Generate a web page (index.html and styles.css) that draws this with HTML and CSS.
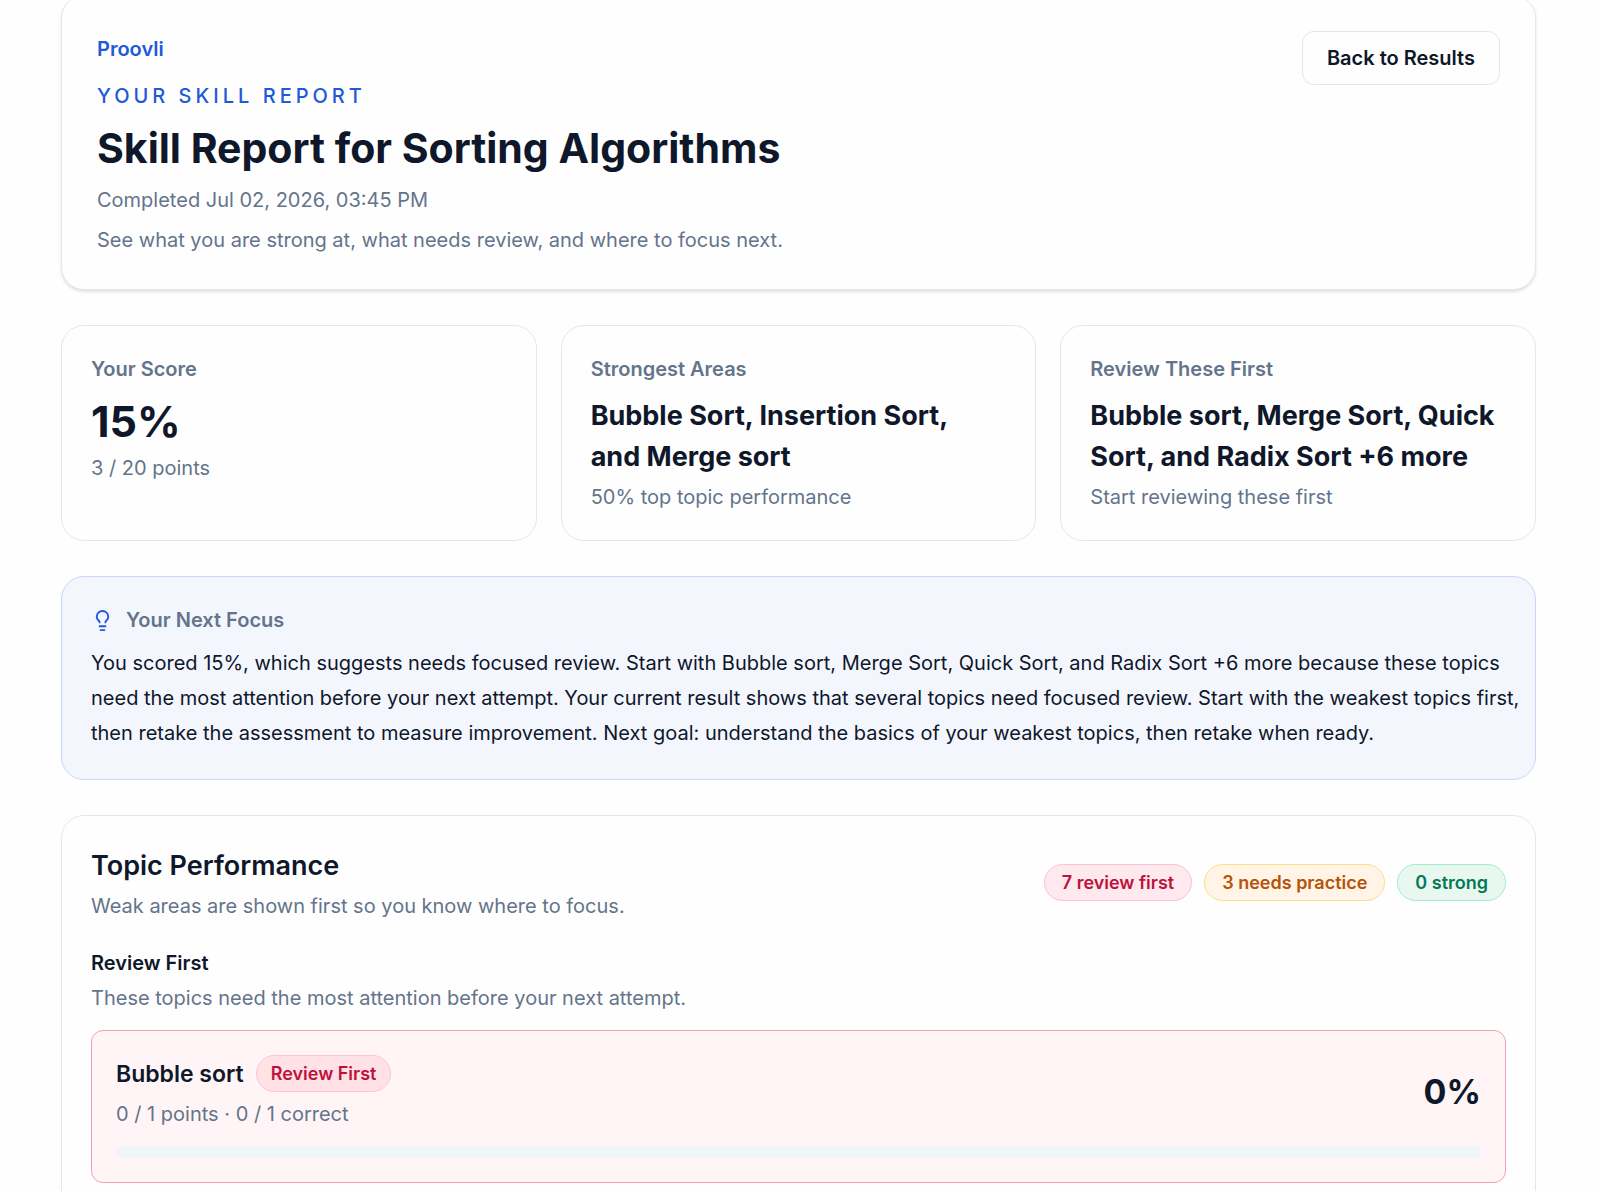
FILE: index.html
```
<!DOCTYPE html>
<html lang="en">
<head>
    <meta charset="UTF-8">
    <meta name="viewport" content="width=device-width, initial-scale=1.0">
    <title>Skill Report for Sorting Algorithms</title>
    <link rel="stylesheet" href="styles.css">
</head>
<body>
    <main class="report">
        <header class="card report-header">
            <div>
                <a class="brand" href="#">Proovli</a>
                <p class="eyebrow">Your Skill Report</p>
                <h1>Skill Report for Sorting Algorithms</h1>
                <p class="muted completed">Completed Jul 02, 2026, 03:45 PM</p>
                <p class="muted intro">See what you are strong at, what needs review, and where to focus next.</p>
            </div>
            <button class="back-btn" type="button">Back to Results</button>
        </header>

        <section class="summary">
            <div class="card">
                <p class="label">Your Score</p>
                <p class="score">15%</p>
                <p class="muted note">3 / 20 points</p>
            </div>
            <div class="card">
                <p class="label">Strongest Areas</p>
                <p class="areas">Bubble Sort, Insertion Sort, and&nbsp;Merge sort</p>
                <p class="muted note">50% top topic performance</p>
            </div>
            <div class="card">
                <p class="label">Review These First</p>
                <p class="areas">Bubble sort, Merge Sort, Quick Sort, and Radix Sort +6 more</p>
                <p class="muted note">Start reviewing these first</p>
            </div>
        </section>

        <section class="card focus">
            <div class="focus-title">
                <svg class="icon" viewBox="0 0 24 24" fill="none" stroke="currentColor" stroke-width="2" stroke-linecap="round" stroke-linejoin="round" aria-hidden="true">
                    <path d="M15 14c.2-1 .7-1.7 1.5-2.5 1-.9 1.5-2.2 1.5-3.5A6 6 0 0 0 6 8c0 1 .2 2.2 1.5 3.5.7.7 1.3 1.5 1.5 2.5"/>
                    <path d="M9 18h6"/>
                    <path d="M10 22h4"/>
                </svg>
                <h2 class="label">Your Next Focus</h2>
            </div>
            <p class="focus-text">You scored 15%, which suggests needs focused review. Start with Bubble sort, Merge Sort, Quick Sort, and Radix Sort +6 more because these topics need the most attention before your next attempt. Your current result shows that several topics need focused review. Start with the weakest topics first, then retake the assessment to measure improvement. Next goal: understand the basics of your weakest topics, then retake when ready.</p>
        </section>

        <section class="card topics">
            <div class="topics-header">
                <div>
                    <h2>Topic Performance</h2>
                    <p class="muted note">Weak areas are shown first so you know where to focus.</p>
                </div>
                <div class="pills">
                    <span class="pill pill-red">7 review first</span>
                    <span class="pill pill-amber">3 needs practice</span>
                    <span class="pill pill-green">0 strong</span>
                </div>
            </div>

            <h3>Review First</h3>
            <p class="muted group-note">These topics need the most attention before your next attempt.</p>

            <article class="topic">
                <div class="topic-row">
                    <div>
                        <div class="topic-name">
                            <h4>Bubble sort</h4>
                            <span class="pill pill-status">Review First</span>
                        </div>
                        <p class="muted topic-points">0 / 1 points · 0 / 1 correct</p>
                    </div>
                    <span class="topic-percent">0%</span>
                </div>
                <div class="bar"><div class="bar-fill" style="width: 0%"></div></div>
            </article>
        </section>
    </main>
</body>
</html>
```

FILE: styles.css
```
* {
    box-sizing: border-box;
}

body {
    margin: 0;
    background-color: #fefefe;
    color: #0f172a;
    font-family: Inter, "Liberation Sans", sans-serif;
    font-size: 20px;
    line-height: 28px;
    overflow: hidden;
}

h1, h2, h3, h4, p {
    margin: 0;
}

/* page sits slightly scrolled, the header top edge is out of view */
.report {
    display: flex;
    flex-direction: column;
    gap: 35px;
    margin: -5px 64px 0 61px;
}

.card {
    padding: 29px;
    background-color: #fefefe;
    border: 1px solid #e2e8e8;
    border-radius: 23px;
}

.muted {
    color: #64748b;
}

.label {
    color: #64748b;
    font-size: 20px;
    font-weight: 600;
}

/* header */
.report-header {
    display: flex;
    justify-content: space-between;
    align-items: flex-start;
    padding: 35px;
    box-shadow: 0 2px 3px rgba(15, 23, 42, 0.12);
}

.brand {
    display: block;
    color: #2159d9;
    font-weight: 600;
    line-height: 37px;
    text-decoration: none;
}

.eyebrow {
    margin-top: 14px;
    color: #2159d9;
    font-weight: 500;
    letter-spacing: 4px;
    text-transform: uppercase;
}

h1 {
    margin-top: 12px;
    font-size: 41px;
    font-weight: 700;
    line-height: 52px;
}

.completed,
.intro {
    margin-top: 12px;
}

.back-btn {
    padding: 12px 24px;
    background-color: #fefefe;
    border: 1px solid #e2e8e8;
    border-radius: 12px;
    color: #0f172a;
    font: inherit;
    font-weight: 600;
    white-space: nowrap;
}

/* summary cards */
.summary {
    display: grid;
    grid-template-columns: repeat(3, 1fr);
    gap: 24px;
}

.score {
    margin-top: 12px;
    font-size: 43px;
    font-weight: 700;
    line-height: 53px;
}

.areas {
    margin-top: 12px;
    font-size: 27px;
    font-weight: 700;
    line-height: 41px;
}

.note {
    margin-top: 6px;
}

/* next focus */
.focus {
    padding: 29px 12px 28px 29px;
    background-color: #f4f6fe;
    border-color: #c9d6f8;
}

.focus-title {
    display: flex;
    align-items: center;
    gap: 12px;
    margin-bottom: 12px;
}

.icon {
    width: 23px;
    height: 23px;
    color: #2159d9;
}

.focus-text {
    line-height: 35px;
}

/* topics */
.topics-header {
    display: flex;
    justify-content: space-between;
    align-items: center;
    margin-bottom: 29px;
}

.topics h2 {
    font-size: 27px;
    font-weight: 600;
    line-height: 41px;
}

.topics h3 {
    font-size: 20px;
    font-weight: 600;
}

.group-note {
    margin-top: 7px;
}

.pills {
    display: flex;
    gap: 12px;
}

.pill {
    padding: 5px 17px;
    border: 1px solid;
    border-radius: 19px;
    font-size: 18px;
    font-weight: 600;
    line-height: 25px;
}

.pill-red {
    background-color: #fee9ee;
    border-color: #fbc2cf;
    color: #be123c;
}

.pill-amber {
    background-color: #fff4e6;
    border-color: #fbdf82;
    color: #b45309;
}

.pill-green {
    background-color: #e8f8f0;
    border-color: #a0edcd;
    color: #047857;
}

.pill-status {
    padding: 5px 14px;
    background-color: #ffe1e6;
    border-color: #fdc5d0;
    color: #be123c;
}

.topic {
    margin-top: 18px;
    padding: 24px;
    background-color: #fff5f6;
    border: 1px solid #f2a0b0;
    border-radius: 12px;
}

.topic-row {
    display: flex;
    justify-content: space-between;
    align-items: center;
}

.topic-name {
    display: flex;
    align-items: center;
    gap: 12px;
}

.topic h4 {
    font-size: 23px;
    font-weight: 600;
}

.topic-points {
    margin-top: 8px;
}

.topic-percent {
    font-size: 34px;
    font-weight: 700;
    line-height: 40px;
}

.bar {
    height: 12px;
    margin-top: 18px;
    background-color: #f1f5f9;
    border-radius: 6px;
    overflow: hidden;
}

.bar-fill {
    height: 100%;
    background-color: #e11d48;
}
```
